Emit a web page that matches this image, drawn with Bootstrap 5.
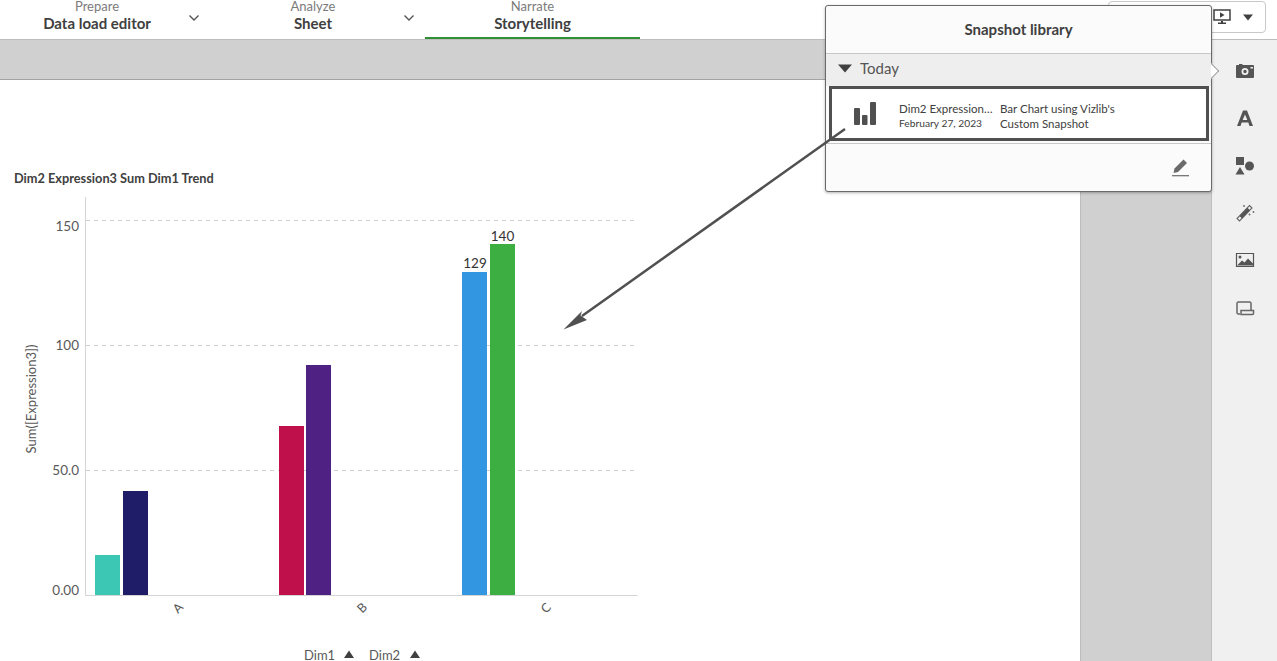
<!DOCTYPE html>
<html lang="en">
<head>
    <meta charset="UTF-8">
    <meta name="viewport" content="width=device-width, initial-scale=1.0">
    <title>Storytelling</title>
    <link href="https://cdn.jsdelivr.net/npm/bootstrap@5.3.0/dist/css/bootstrap.min.css" rel="stylesheet">
    <style>
        html, body { height: 100%; }
        body {
            font-family: "Lato", "Liberation Sans", sans-serif;
            color: #404040;
            background: #fff;
            overflow: hidden;
            position: relative;
        }
        .top-head { height: 40px; border-bottom: 1px solid #bdbdbd; background: #fff; }
        .step-tab { height: 39px; }
        .step-tab.first { width: 212px; padding-left: 6px; padding-right: 12px; }
        .step-tab.second { width: 213px; padding-left: 11px; padding-right: 10px; }
        .step-tab.third { width: 215px; border-bottom: 2px solid #2f8f35; height: 39px; }
        .step-kicker { font-size: 13px; line-height: 12px; color: #7b7b7b; }
        .step-name { font-size: 15px; line-height: 20px; font-weight: 700; color: #404040; margin-top: 1px; }
        .step-chev { width: 12px; flex: none; margin-top: 12px; margin-bottom: auto; }
        .present-box { width: 158px; height: 32px; margin: 1px 11px 0 auto; border: 1px solid #c8c8c8; border-radius: 4px; padding-right: 12px; gap: 12px; }
        .body-area { height: 621px; }
        .sheet-col { width: 1080px; }
        .gray-strip { height: 40px; background: #d0d0d0; border-bottom: 1px solid #a3a3a3; }
        .sheet-area { padding-top: 90px; }
        .sheet-title { font-size: 12.75px; line-height: 16px; font-weight: 700; padding-left: 14px; height: 20px; }
        .side-gutter { width: 131px; background: #d0d0d0; border-left: 1px solid #bdbdbd; }
        .tool-rail { width: 66px; background: #f0f0f0; border-left: 1px solid #bdbdbd; padding-top: 7.5px; }
        .rail-btn { height: 47.3px; }
        .snap-pop {
            position: absolute; left: 825px; top: 5px; width: 387px; height: 187px;
            background: #fbfbfb; border: 1px solid #6a6a6a; border-radius: 3px;
            box-shadow: 0 1px 3px rgba(0,0,0,.3);
        }
        .snap-notch {
            position: absolute; left: 379px; top: 59px; width: 12px; height: 12px; transform: rotate(45deg);
            background: #fff; border-top: 1px solid #8a8a8a; border-right: 1px solid #8a8a8a;
            clip-path: polygon(0 0, 100% 0, 100% 100%);
        }
        .snap-head { height: 48px; border-bottom: 1px solid #c8c8c8; font-size: 15px; font-weight: 700; }
        .snap-group { height: 32px; background: #eee; padding-left: 12px; padding-bottom: 3px; font-size: 15px; color: #555; }
        .snap-item { height: 55px; margin: 0 2px 0 3px; padding-top: 4px; background: #fff; border: 3px solid #505050; font-size: 11.5px; line-height: 15px; }
        .snap-icon { width: 67px; flex: none; padding-left: 22px; padding-bottom: 4px; }
        .snap-col1 { width: 101px; flex: none; padding-right: 4px; white-space: nowrap; }
        .snap-date { font-size: 10.25px; }
        .snap-foot { flex-grow: 1; border-top: 1px solid #c8c8c8; margin-top: 2px; padding-right: 21px; }
        .arrow-layer { position: absolute; left: 0; top: 0; pointer-events: none; }
        svg text { font-family: "Lato", "Liberation Sans", sans-serif; }
    </style>
</head>
<body>
    <div class="top-head d-flex">
        <div class="step-tab first d-flex">
            <div class="flex-grow-1 text-center">
                <div class="step-kicker">Prepare</div>
                <div class="step-name">Data load editor</div>
            </div>
            <svg class="step-chev" width="12" height="12" viewBox="0 0 12 12"><path d="M1.500 3.500 6 8l4.500-4.500" fill="none" stroke="#555" stroke-width="1.400"/></svg>
        </div>
        <div class="step-tab second d-flex">
            <div class="flex-grow-1 text-center">
                <div class="step-kicker">Analyze</div>
                <div class="step-name">Sheet</div>
            </div>
            <svg class="step-chev" width="12" height="12" viewBox="0 0 12 12"><path d="M1.500 3.500 6 8l4.500-4.500" fill="none" stroke="#555" stroke-width="1.400"/></svg>
        </div>
        <div class="step-tab third text-center">
            <div class="step-kicker">Narrate</div>
            <div class="step-name">Storytelling</div>
        </div>
        <div class="present-box d-flex align-items-center justify-content-end">
            <svg width="18" height="16" viewBox="0 0 18 16"><path d="M1 1h16v10H1z" fill="none" stroke="#404040" stroke-width="1.500"/><path d="M7 3.200l4.500 2.800L7 8.800zM8 12h2v1.500h3V15H5v-1.500h3z" fill="#404040"/></svg>
            <svg width="10" height="7" viewBox="0 0 10 7"><path d="M0 .5h10L5 6.500z" fill="#404040"/></svg>
        </div>
    </div>
    <div class="body-area d-flex">
        <div class="sheet-col">
            <div class="gray-strip"></div>
            <div class="sheet-area">
                <div class="sheet-title">Dim2 Expression3 Sum Dim1 Trend</div>
                <svg class="d-block" width="660" height="471" viewBox="0 190 660 471">
                    <g stroke="#cfcfcf" stroke-width="1" stroke-dasharray="4 4">
                        <path d="M86 220.500H637M86 345.500H637M86 470.500H637"/>
                    </g>
                    <path d="M85.500 197V595.500H637.500" fill="none" stroke="#d4d4d4"/>
                    <g fill="#595959" font-size="13.500" text-anchor="end">
                        <text x="79" y="231">150</text>
                        <text x="79" y="350">100</text>
                        <text x="79" y="475">50.0</text>
                        <text x="79" y="595">0.00</text>
                    </g>
                    <text transform="translate(36 399) rotate(-90)" fill="#595959" font-size="13" text-anchor="middle">Sum([Expression3])</text>
                    <rect x="95" y="555" width="25" height="40" fill="#3cc6b4"/>
                    <rect x="123" y="491" width="25" height="104" fill="#201d68"/>
                    <rect x="279" y="426" width="25" height="169" fill="#c0104c"/>
                    <rect x="306" y="365" width="25" height="230" fill="#4f2183"/>
                    <rect x="462" y="272" width="25" height="323" fill="#3296e0"/>
                    <rect x="490" y="244" width="25" height="351" fill="#3dae41"/>
                    <g fill="#333" font-size="13.500" text-anchor="middle">
                        <text x="475" y="268">129</text>
                        <text x="502.500" y="241">140</text>
                    </g>
                    <g fill="#595959" font-size="12.500" text-anchor="middle">
                        <text transform="translate(181 611) rotate(-45)">A</text>
                        <text transform="translate(365 611) rotate(-45)">B</text>
                        <text transform="translate(549 611) rotate(-45)">C</text>
                    </g>
                    <g fill="#595959" font-size="13">
                        <text x="304" y="660">Dim1</text>
                        <text x="369" y="660">Dim2</text>
                    </g>
                    <path d="M344 658h10l-5-7.500zM410 658h10l-5-7.500z" fill="#404040"/>
                </svg>
            </div>
        </div>
        <div class="side-gutter"></div>
        <div class="tool-rail d-flex flex-column align-items-center">
            <div class="rail-btn d-flex align-items-center justify-content-center">
                <svg width="20" height="20" viewBox="0 0 20 20"><path fill-rule="evenodd" d="M2 4h2V3h3l1 1h10a1 1 0 0 1 1 1v11a1 1 0 0 1-1 1H2a1 1 0 0 1-1-1V5a1 1 0 0 1 1-1zm8 3a3.500 3.500 0 1 0 0 7 3.500 3.500 0 0 0 0-7zm0 1.800a1.700 1.700 0 1 1 0 3.400 1.700 1.700 0 0 1 0-3.400zM15.500 6v1.500H18V6z" fill="#555"/></svg>
            </div>
            <div class="rail-btn d-flex align-items-center justify-content-center">
                <svg width="20" height="20" viewBox="0 0 20 20"><path fill-rule="evenodd" d="M8 2.500h4L18 18h-3.500l-1.200-3.400H6.700L5.500 18H2zM10 6.500 7.700 12h4.600z" fill="#555"/></svg>
            </div>
            <div class="rail-btn d-flex align-items-center justify-content-center">
                <svg width="20" height="20" viewBox="0 0 20 20"><path d="M1 1h8v8H1zM5 11l4.500 7.500H.5z" fill="#555"/><circle cx="14.500" cy="10" r="4.500" fill="#555"/></svg>
            </div>
            <div class="rail-btn d-flex align-items-center justify-content-center">
                <svg width="20" height="20" viewBox="0 0 20 20"><path d="M14.500 2.500 17 5 4.500 18 2 15.500z" fill="none" stroke="#666" stroke-width="1.100"/><path d="M12.500 4.700 15 7.200 7 15.500 4.500 13z" fill="#555"/><path d="M8 3h2M9 2v2M17.500 9h2M18.500 8v2M13.500 11.500h2M14.500 10.500v2" stroke="#777"/></svg>
            </div>
            <div class="rail-btn d-flex align-items-center justify-content-center">
                <svg width="20" height="18" viewBox="0 0 20 18"><path d="M1.500 2.500h17v13h-17z" fill="none" stroke="#555" stroke-width="1.200"/><circle cx="5" cy="6" r="1.500" fill="#555"/><path d="M2 14.500 7 9.500l2.500 2L13 7.500l5 5v2z" fill="#555"/></svg>
            </div>
            <div class="rail-btn d-flex align-items-center justify-content-center">
                <svg width="20" height="18" viewBox="0 0 20 18"><path d="M5 15H3.500A1.500 1.500 0 0 1 2 13.500V4.500A1.500 1.500 0 0 1 3.500 3h11A1.500 1.500 0 0 1 16 4.500V11" fill="none" stroke="#666" stroke-width="1.500"/><path d="M6 11.500h12.500v3a1 1 0 0 1-1 1H6z" fill="#f0f0f0" stroke="#666" stroke-width="1.500"/></svg>
            </div>
        </div>
    </div>

    <div class="snap-pop d-flex flex-column">
        <div class="snap-notch"></div>
        <div class="snap-head d-flex align-items-center justify-content-center">Snapshot library</div>
        <div class="snap-group d-flex align-items-center gap-2">
            <svg width="14" height="9" viewBox="0 0 14 9"><path d="M0 .5h14L7 8.500z" fill="#404040"/></svg>
            <span>Today</span>
        </div>
        <div class="snap-item d-flex align-items-center">
            <div class="snap-icon">
                <svg class="d-block" width="23" height="23" viewBox="0 0 23 23"><rect x="0" y="6" width="6" height="17" rx="1" fill="#505050"/><rect x="8" y="13" width="5.500" height="10" rx="1" fill="#505050"/><rect x="16" y="0" width="6" height="23" rx="1" fill="#505050"/></svg>
            </div>
            <div class="snap-col1">
                <div>Dim2 Expression…</div>
                <div class="snap-date">February 27, 2023</div>
            </div>
            <div>
                <div>Bar Chart using Vizlib's</div>
                <div>Custom Snapshot</div>
            </div>
        </div>
        <div class="snap-foot d-flex align-items-center justify-content-end">
            <svg width="19" height="19" viewBox="0 0 19 19"><path d="M12.500 1.500 16 5 7 14l-4.500 1L3.500 10.500z" fill="#6a6a6a"/><path d="M1 17.700h17" stroke="#6a6a6a" stroke-width="1.200"/></svg>
        </div>
    </div>

    <svg class="arrow-layer" width="1277" height="661" viewBox="0 0 1277 661">
        <path d="M845 129 582 316" fill="none" stroke="#505050" stroke-width="2.500"/>
        <path d="M563.500 329.500 582 311 580.500 315.500 587 320z" fill="#505050"/>
    </svg>
</body>
</html>
